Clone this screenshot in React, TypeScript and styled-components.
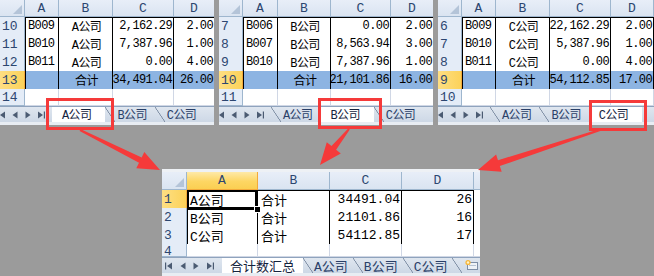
import React from 'react'
import styled, { createGlobalStyle } from 'styled-components'

const FONT = `"Liberation Mono", "Noto Sans CJK SC", monospace`
const GRID = '#d0d7e5'
const HEAD_LINE = '#9eb6ce'
const SEL_LINE = '#f2a93b'

type Align = 'flex-start' | 'center' | 'flex-end'

interface RowData {
  num: string
  cells: string[]
  total?: boolean
  plain?: boolean
  height?: number
}

interface SheetProps {
  width: number
  cols: number[]
  aligns: Align[]
  letters: string[]
  headH: number
  rowH: number
  rows: RowData[]
  selRow?: number
  selCol?: number
  tabs: string[]
  active: number
  navW: number
  navShift: number
  size: number
  spacing: number
  tabPad: [number, number]
  activePad: [number, number]
  topStrip?: boolean
  activeCell?: boolean
  insert?: boolean
}

const GlobalStyle = createGlobalStyle`
  html, body {
    margin: 0;
    padding: 0;
    background: #9b9b9b;
  }
  body {
    font-family: ${FONT};
  }
`

const NavIcon: React.FC<{ kind: 'first' | 'prev' | 'next' | 'last' }> = ({ kind }) => (
  <svg width="8" height="8" viewBox="0 0 8 8">
    {kind === 'first' && (
      <>
        <rect x="0" y="0.5" width="1.2" height="7" fill="#4b5b72" />
        <polygon points="7,0.5 2,4 7,7.5" fill="#4b5b72" />
      </>
    )}
    {kind === 'prev' && <polygon points="6.5,0.5 1.5,4 6.5,7.5" fill="#4b5b72" />}
    {kind === 'next' && <polygon points="1.5,0.5 6.5,4 1.5,7.5" fill="#4b5b72" />}
    {kind === 'last' && (
      <>
        <polygon points="1,0.5 6,4 1,7.5" fill="#4b5b72" />
        <rect x="6.8" y="0.5" width="1.2" height="7" fill="#4b5b72" />
      </>
    )}
  </svg>
)

const InsertIcon = () => (
  <svg width="14" height="12" viewBox="0 0 14 12">
    <rect x="3.5" y="3.5" width="10" height="7" fill="#eef2f7" stroke="#7d8ea6" />
    <line x1="5" y1="6.5" x2="12" y2="6.5" stroke="#b7c3d3" />
    <circle cx="4" cy="3.5" r="2.6" fill="#f6b73c" />
    <circle cx="4" cy="3.5" r="1.2" fill="#fff3c9" />
  </svg>
)

const Sheet: React.FC<SheetProps> = ({
  width,
  cols,
  aligns,
  letters,
  headH,
  rowH,
  rows,
  selRow,
  selCol,
  tabs,
  active,
  navW,
  navShift,
  size,
  spacing,
  tabPad,
  activePad,
  topStrip,
  activeCell,
  insert,
}) => {
  return (
    <Panel $w={width}>
      {topStrip && <TopStrip />}
      <GridRow $cols={cols} $h={headH}>
        <Corner>
          <svg width="9" height="9" viewBox="0 0 9 9">
            <polygon points="9,0 9,9 0,9" fill="#b4c4d8" />
          </svg>
        </Corner>
        {letters.map((l, j) => (
          <ColHead key={j} $sel={j === selCol}>
            {l}
          </ColHead>
        ))}
      </GridRow>
      {rows.map((row, i) => (
        <GridRow key={row.num} $cols={cols} $h={row.height ?? rowH}>
          <RowHead $sel={i === selRow} $short={!!row.height && row.height < 16}>
            {row.num}
          </RowHead>
          {row.cells.map((c, j) => {
            const bordered = !row.plain && j < 4
            return (
              <Cell
                key={j}
                $align={aligns[j]}
                $bordered={bordered}
                $first={bordered && j === 0}
                $top={bordered && i === 0}
                $total={!!row.total && j < 4}
                $active={!!activeCell && i === 0 && j === 0}
                $size={size}
                $spacing={spacing}
              >
                {c}
              </Cell>
            )
          })}
        </GridRow>
      ))}
      <TabBar $size={size} $spacing={spacing}>
        <Nav $w={navW} $shift={navShift}>
          <NavIcon kind="first" />
          <NavIcon kind="prev" />
          <NavIcon kind="next" />
          <NavIcon kind="last" />
        </Nav>
        {tabs.map((t, i) => (
          <Tab key={t} $active={i === active} $first={i === 0} $pad={i === active ? activePad : tabPad}>
            {t}
          </Tab>
        ))}
        {insert && (
          <Tab $active={false} $first={false} $pad={[12, 2]}>
            <InsertIcon />
          </Tab>
        )}
      </TabBar>
      <BottomStrip />
    </Panel>
  )
}

// arrow drawn as a tapered shaft with a triangular head
const arrow = (sx: number, sy: number, tx: number, ty: number, head = 22, hw = 18, w0 = 2, w1 = 6) => {
  const len = Math.hypot(tx - sx, ty - sy)
  const dx = (tx - sx) / len
  const dy = (ty - sy) / len
  const nx = -dy
  const ny = dx
  const bx = tx - dx * head
  const by = ty - dy * head
  const pts = [
    [sx + (nx * w0) / 2, sy + (ny * w0) / 2],
    [bx + (nx * w1) / 2, by + (ny * w1) / 2],
    [bx + (nx * hw) / 2, by + (ny * hw) / 2],
    [tx, ty],
    [bx - (nx * hw) / 2, by - (ny * hw) / 2],
    [bx - (nx * w1) / 2, by - (ny * w1) / 2],
    [sx - (nx * w0) / 2, sy - (ny * w0) / 2],
  ]
  return pts.map(p => p.map(v => v.toFixed(1)).join(',')).join(' ')
}

const TOP_ALIGNS: Align[] = ['flex-start', 'center', 'flex-end', 'flex-end']
const TOP_LETTERS = ['A', 'B', 'C', 'D']

const panelA: RowData[] = [
  { num: '10', cells: ['B009', 'A公司', '2,162.29', '2.00'] },
  { num: '11', cells: ['B010', 'A公司', '7,387.96', '1.00'] },
  { num: '12', cells: ['B011', 'A公司', '0.00', '4.00'] },
  { num: '13', cells: ['', '合计', '34,491.04', '26.00'], total: true },
  { num: '14', cells: ['', '', '', ''], plain: true, height: 17 },
]
const panelB: RowData[] = [
  { num: '7', cells: ['B006', 'B公司', '0.00', '2.00'] },
  { num: '8', cells: ['B007', 'B公司', '8,563.94', '3.00'] },
  { num: '9', cells: ['B010', 'B公司', '7,387.96', '1.00'] },
  { num: '10', cells: ['', '合计', '21,101.86', '16.00'], total: true },
  { num: '11', cells: ['', '', '', ''], plain: true, height: 17 },
]
const panelC: RowData[] = [
  { num: '6', cells: ['B009', 'C公司', '22,162.29', '2.00'] },
  { num: '7', cells: ['B010', 'C公司', '5,387.96', '1.00'] },
  { num: '8', cells: ['B011', 'C公司', '0.00', '4.00'] },
  { num: '9', cells: ['', '合计', '54,112.85', '17.00'], total: true },
  { num: '10', cells: ['', '', '', ''], plain: true, height: 17 },
]
const summary: RowData[] = [
  { num: '1', cells: ['A公司', '合计', '34491.04', '26', ''] },
  { num: '2', cells: ['B公司', '合计', '21101.86', '16', ''] },
  { num: '3', cells: ['C公司', '合计', '54112.85', '17', ''] },
  { num: '4', cells: ['', '', '', '', ''], plain: true, height: 13 },
]

const SHEET_TABS = ['A公司', 'B公司', 'C公司']

const topSheet = {
  aligns: TOP_ALIGNS,
  letters: TOP_LETTERS,
  headH: 17,
  rowH: 18,
  selRow: 3,
  tabs: SHEET_TABS,
  navW: 52,
  navShift: -5,
  size: 12,
  spacing: -0.6,
  tabPad: [12, 8] as [number, number],
  activePad: [10, 14] as [number, number],
}

const App: React.FC = () => {
  return (
    <Page>
      <GlobalStyle />
      <TopRow>
        <Sheet {...topSheet} width={214} cols={[25, 34, 54, 61, 41]} rows={panelA} active={0} />
        <Sheet {...topSheet} width={214} cols={[24, 35, 53, 60, 43]} rows={panelB} active={1} />
        <Sheet {...topSheet} width={216} cols={[24, 34, 54, 61, 43]} rows={panelC} active={2} />
      </TopRow>
      <Summary>
        <Sheet
          width={318}
          cols={[25, 71, 72, 72, 72, 12]}
          aligns={['flex-start', 'flex-start', 'flex-end', 'flex-end', 'flex-start']}
          letters={['A', 'B', 'C', 'D', '']}
          headH={18}
          rowH={18}
          rows={summary}
          selRow={0}
          selCol={0}
          tabs={['合计数汇总', ...SHEET_TABS]}
          active={0}
          navW={55}
          navShift={0}
          size={13}
          spacing={0}
          tabPad={[11, 5]}
          activePad={[8, 8]}
          topStrip
          activeCell
          insert
        />
      </Summary>
      <Overlay width="654" height="276" viewBox="0 0 654 276">
        <g fill="none" stroke="#f53a3a" strokeWidth="3">
          <rect x="47.5" y="99.5" width="65" height="29" />
          <rect x="319.5" y="99.5" width="61" height="28" />
          <rect x="590.5" y="101.5" width="55" height="28" />
        </g>
        <g fill="#f53a3a">
          <polygon points={arrow(80, 130, 160, 170)} />
          <polygon points={arrow(349, 129, 320, 165)} />
          <polygon points={arrow(600, 130, 478, 170)} />
        </g>
      </Overlay>
    </Page>
  )
}

export default App

const Page = styled.div`
  position: relative;
  width: 654px;
  height: 276px;
  overflow: hidden;
  background: #9b9b9b;
  display: flex;
  flex-direction: column;
`
const TopRow = styled.div`
  display: flex;
  gap: 5px;
  height: 125px;
  flex: none;
`
const Summary = styled.div`
  margin: 44px 0 0 162px;
  display: flex;
`
const Panel = styled.div<{ $w: number }>`
  width: ${({ $w }) => $w}px;
  flex: none;
  overflow: hidden;
  background: #fff;
  display: flex;
  flex-direction: column;
  font-family: ${FONT};
`
const TopStrip = styled.div`
  height: 3px;
  flex: none;
  background: #eef1f5;
`
const GridRow = styled.div<{ $cols: number[]; $h: number }>`
  display: grid;
  grid-template-columns: ${({ $cols }) => $cols.map(c => `${c}px`).join(' ')};
  height: ${({ $h }) => $h}px;
  flex: none;
`
const Corner = styled.div`
  box-sizing: border-box;
  border-right: 1px solid ${HEAD_LINE};
  border-bottom: 1px solid ${HEAD_LINE};
  background: linear-gradient(#e8eef8, #dae4f1);
  display: flex;
  align-items: flex-end;
  justify-content: flex-end;
  padding: 0 2px 2px 0;
`
const ColHead = styled.div<{ $sel: boolean }>`
  box-sizing: border-box;
  border-right: 1px solid ${({ $sel }) => ($sel ? SEL_LINE : HEAD_LINE)};
  border-bottom: 1px solid ${({ $sel }) => ($sel ? SEL_LINE : HEAD_LINE)};
  background: ${({ $sel }) =>
    $sel ? 'linear-gradient(#fee9a8, #fdd663 55%, #fbcf52)' : 'linear-gradient(#e8eef8, #dae4f1)'};
  color: #2c4670;
  font-size: 13px;
  display: flex;
  align-items: center;
  justify-content: center;
  overflow: hidden;
`
const RowHead = styled.div<{ $sel: boolean; $short: boolean }>`
  box-sizing: border-box;
  border-right: 1px solid ${({ $sel }) => ($sel ? SEL_LINE : HEAD_LINE)};
  border-bottom: 1px solid ${({ $sel }) => ($sel ? SEL_LINE : HEAD_LINE)};
  background: ${({ $sel }) => ($sel ? 'linear-gradient(90deg, #fedf83, #fcd25a)' : '#e4ecf7')};
  color: #2c4670;
  font-size: 13px;
  line-height: 13px;
  display: flex;
  align-items: ${({ $short }) => ($short ? 'flex-start' : 'center')};
  padding: ${({ $short }) => ($short ? '1px 0 0 2px' : '0 0 0 2px')};
  overflow: hidden;
`
const Cell = styled.div<{
  $align: Align
  $bordered: boolean
  $first: boolean
  $top: boolean
  $total: boolean
  $active: boolean
  $size: number
  $spacing: number
}>`
  position: relative;
  z-index: ${({ $active }) => ($active ? 1 : 'auto')};
  box-sizing: border-box;
  min-width: 0;
  border-right: 1px solid ${({ $bordered }) => ($bordered ? '#000' : GRID)};
  border-bottom: 1px solid ${({ $bordered }) => ($bordered ? '#000' : GRID)};
  box-shadow: ${({ $top, $first, $active }) =>
    [
      $top && 'inset 0 1px 0 #000',
      $first && 'inset 1px 0 0 #000',
      $active && 'inset 0 0 0 2px #000',
    ]
      .filter(Boolean)
      .join(', ') || 'none'};
  background: ${({ $total }) => ($total ? '#8db4e2' : '#fff')};
  color: #000;
  font-size: ${({ $size }) => $size}px;
  letter-spacing: ${({ $spacing }) => $spacing}px;
  display: flex;
  align-items: center;
  justify-content: ${({ $align }) => $align};
  padding: 0 1px 0 3px;
  white-space: nowrap;
  &::after {
    content: '';
    display: ${({ $active }) => ($active ? 'block' : 'none')};
    position: absolute;
    right: -4px;
    bottom: -4px;
    width: 5px;
    height: 5px;
    background: #000;
    border: 1px solid #fff;
  }
`
const TabBar = styled.div<{ $size: number; $spacing: number }>`
  height: 16px;
  flex: none;
  display: flex;
  align-items: stretch;
  box-sizing: border-box;
  border-top: 1px solid #8fa3bd;
  background: linear-gradient(#dfe6ef, #cdd8e6);
  font-size: ${({ $size }) => $size}px;
  letter-spacing: ${({ $spacing }) => $spacing}px;
`
const Nav = styled.div<{ $w: number; $shift: number }>`
  width: ${({ $w }) => $w}px;
  margin-left: ${({ $shift }) => $shift}px;
  flex: none;
  display: flex;
  align-items: center;
  justify-content: space-around;
`
const Tab = styled.div<{ $active: boolean; $first: boolean; $pad: [number, number] }>`
  position: relative;
  flex: none;
  display: flex;
  align-items: center;
  padding: 0 ${({ $pad }) => $pad[1]}px 1px ${({ $pad }) => $pad[0]}px;
  margin-left: ${({ $first }) => ($first ? 5 : 0)}px;
  background: ${({ $active }) => ($active ? '#fff' : 'transparent')};
  color: ${({ $active }) => ($active ? '#14233d' : '#2a4068')};
  white-space: nowrap;
  &::before {
    content: '';
    display: ${({ $active }) => ($active ? 'none' : 'block')};
    position: absolute;
    left: 0;
    top: 0;
    bottom: 0;
    width: 10px;
    background: linear-gradient(
      to top right,
      transparent calc(50% - 0.7px),
      #6e7f97 50%,
      transparent calc(50% + 0.7px)
    );
  }
`
const BottomStrip = styled.div`
  height: 3px;
  flex: none;
  background: #e8edf3;
`
const Overlay = styled.svg`
  position: absolute;
  left: 0;
  top: 0;
  pointer-events: none;
`
